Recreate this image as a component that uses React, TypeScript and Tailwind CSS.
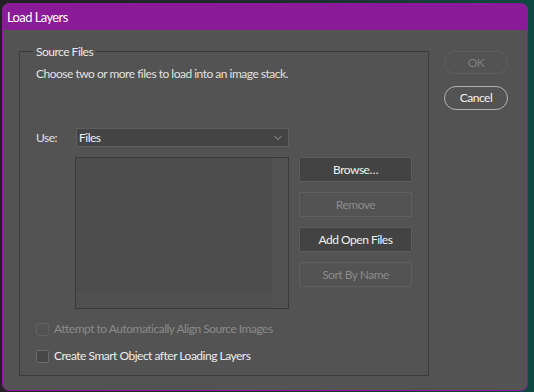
import { ChevronDown } from 'lucide-react';

function DlgButton({ label, disabled }: { label: string; disabled?: boolean }) {
  return (
    <button
      className={
        disabled
          ? 'h-[25px] w-[113px] border border-[#5f5f5f] bg-[#535353] text-[#8b8b8b] rounded-[1px]'
          : 'h-[25px] w-[113px] border border-[#5c5c5c] bg-[#434343] text-[#f0f0f0] rounded-[1px]'
      }
    >
      {label}
    </button>
  );
}

function CheckRow({ label, disabled }: { label: string; disabled?: boolean }) {
  return (
    <div className="flex items-center gap-[5px] h-[14px]">
      <span
        className={
          disabled
            ? 'w-[13px] h-[13px] rounded-[2px] border border-[#606060] bg-[#535353]'
            : 'w-[13px] h-[13px] rounded-[2px] border border-[#6a6a6a] bg-[#474747]'
        }
      />
      <span className={disabled ? 'text-[#8a8a8a]' : 'text-[#ececec]'}>{label}</span>
    </div>
  );
}

export default function App() {
  return (
    <div
      className="w-[534px] h-[392px] overflow-hidden bg-gradient-to-r from-[#241f26] via-[#1d2b2a] to-[#0c4a42] pt-[3px] pl-[2px] text-[12px] leading-4 tracking-[-0.5px]"
      style={{ fontFamily: 'Lato, "Noto Sans", sans-serif' }}
    >
      <div className="w-[526px] h-[388px] rounded-[7px] border border-[#8b1a98] bg-[#535353] overflow-hidden flex flex-col">
        {/* Title bar */}
        <div className="h-[26px] bg-[#8b1a98] flex items-center pl-[4px] text-[13px] tracking-[-0.6px] text-white">
          Load Layers
        </div>

        {/* Body */}
        <div className="flex pt-[21px] pl-[16px]">
          {/* Source files group */}
          <div className="relative w-[410px] h-[325px] border border-[#3d3d3d] flex flex-col pl-[16px]">
            <span className="absolute left-[13px] top-[-8px] px-[3px] bg-[#535353] text-[#e8e8e8]">
              Source Files
            </span>
            <p className="mt-[14px] text-[#e0e0e0]">Choose two or more files to load into an image stack.</p>

            <div className="flex items-center mt-[46px]">
              <span className="w-[40px] text-[#e0e0e0]">Use:</span>
              <div className="w-[213px] h-[19px] bg-[#444444] border border-[#5e5e5e] flex items-center justify-between pl-[2px] pr-[4px] text-[#f0f0f0]">
                <span>Files</span>
                <ChevronDown className="w-[12px] h-[12px] text-[#bdbdbd]" strokeWidth={1.5} />
              </div>
            </div>

            <div className="flex mt-[10px] ml-[39px] gap-[10px]">
              <div className="w-[214px] h-[152px] border border-[#3a3a3a] bg-[#4d4d4d] flex">
                <div className="flex-1 flex flex-col">
                  <div className="flex-1" />
                  <div className="h-[15px] bg-[#505050]" />
                </div>
                <div className="w-[16px] bg-[#515151]" />
              </div>
              <div className="flex flex-col gap-[10px]">
                <DlgButton label="Browse…" />
                <DlgButton label="Remove" disabled />
                <DlgButton label="Add Open Files" />
                <DlgButton label="Sort By Name" disabled />
              </div>
            </div>

            <div className="flex flex-col gap-[13px] mt-[13px]">
              <CheckRow label="Attempt to Automatically Align Source Images" disabled />
              <CheckRow label="Create Smart Object after Loading Layers" />
            </div>
          </div>

          {/* OK / Cancel */}
          <div className="flex flex-col gap-[12px] ml-[15px]">
            <button className="w-[64px] h-[23px] rounded-full border border-[#5f5f5f] text-[#7f7f7f]">OK</button>
            <button className="w-[64px] h-[24px] rounded-full border border-[#b4b4b4] text-[#f0f0f0]">Cancel</button>
          </div>
        </div>
      </div>
    </div>
  );
}
